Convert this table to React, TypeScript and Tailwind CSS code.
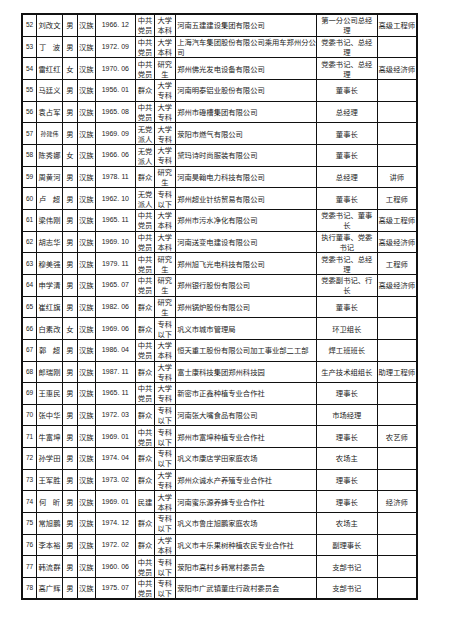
import React from "react";

type Row = [string, string, string, string, string, string, string, string, string, string];

const rows: Row[] = [
  ["52", "刘改文", "男", "汉族", "1966.12", "中共\n党员", "大学\n本科", "河南五建建设集团有限公司", "第一分公司总经\n理", "高级工程师"],
  ["53", "丁波", "男", "汉族", "1972.09", "中共\n党员", "大学\n本科", "上海汽车集团股份有限公司乘用车郑州分公\n司", "党委书记、总经\n理", ""],
  ["54", "雷红红", "女", "汉族", "1970.06", "中共\n党员", "研究\n生", "郑州佛光发电设备有限公司", "党委书记、总经\n理", "高级经济师"],
  ["55", "马廷义", "男", "汉族", "1956.01", "群众", "大学\n专科", "河南明泰铝业股份有限公司", "董事长", ""],
  ["56", "袁占军", "男", "汉族", "1965.08", "中共\n党员", "大学\n专科", "郑州市磴槽集团有限公司", "总经理", ""],
  ["57", "孙建伟", "男", "汉族", "1969.09", "无党\n派人\n士", "大学\n专科", "荥阳市燃气有限公司", "董事长", ""],
  ["58", "陈秀娜", "女", "汉族", "1966.06", "无党\n派人\n士", "大学\n专科", "黛玛诗时尚服装有限公司", "董事长", ""],
  ["59", "周黄河", "男", "汉族", "1978.11", "群众", "研究\n生", "河南昊翰电力科技有限公司", "总经理", "讲师"],
  ["60", "卢超", "男", "汉族", "1962.10", "无党\n派人\n士", "专科\n以下", "郑州超业针纺贸易有限公司", "董事长", "工程师"],
  ["61", "梁伟刚", "男", "汉族", "1965.11", "中共\n党员", "大学\n本科", "郑州市污水净化有限公司", "党委书记、董事\n长", "高级工程师"],
  ["62", "胡志华", "男", "汉族", "1969.10", "中共\n党员", "大学\n本科", "河南送变电建设有限公司", "执行董事、党委\n书记", "高级经济师"],
  ["63", "穆美强", "男", "汉族", "1979.11", "中共\n党员", "研究\n生", "郑州旭飞光电科技有限公司", "党委书记、总经\n理", "工程师"],
  ["64", "申学清", "男", "汉族", "1965.07", "中共\n党员", "研究\n生", "郑州银行股份有限公司", "党委副书记、行\n长", "高级经济师"],
  ["65", "崔红旗", "男", "汉族", "1982.06", "群众", "研究\n生", "郑州锅炉股份有限公司", "董事长", ""],
  ["66", "白素改", "女", "汉族", "1969.06", "群众", "专科\n以下", "巩义市城市管理局", "环卫组长", ""],
  ["67", "郭超", "男", "汉族", "1986.04", "中共\n党员", "大学\n本科", "恒天重工股份有限公司加工事业部二工部", "焊工班班长", ""],
  ["68", "郎瑞刚", "男", "汉族", "1987.11", "群众", "大学\n专科", "富士康科技集团郑州科技园", "生产技术组组长", "助理工程师"],
  ["69", "王惠民", "男", "汉族", "1965.11", "中共\n党员", "大学\n专科", "新密市正鑫种植专业合作社", "理事长", ""],
  ["70", "张中华", "男", "汉族", "1972.03", "群众", "专科\n以下", "河南张大嘴食品有限公司", "市场经理", ""],
  ["71", "牛富坤", "男", "汉族", "1969.01", "中共\n党员", "专科\n以下", "郑州市富坤种植专业合作社", "理事长", "农艺师"],
  ["72", "孙学田", "男", "汉族", "1974.04", "群众", "专科\n以下", "巩义市康店学田家庭农场", "农场主", ""],
  ["73", "王军胜", "男", "汉族", "1973.02", "群众", "大学\n专科", "郑州众诚水产养殖专业合作社", "理事长", ""],
  ["74", "何昕", "男", "汉族", "1969.01", "民建", "大学\n本科", "河南蜜乐源养蜂专业合作社", "理事长", "经济师"],
  ["75", "常旭鹏", "男", "汉族", "1974.12", "群众", "专科\n以下", "巩义市鲁庄旭鹏家庭农场", "农场主", ""],
  ["76", "李本裕", "男", "汉族", "1972.02", "群众", "大学\n本科", "巩义市丰乐果树种植农民专业合作社", "副理事长", ""],
  ["77", "韩流群", "男", "汉族", "1960.06", "中共\n党员", "专科\n以下", "荥阳市高村乡韩常村委员会", "支部书记", ""],
  ["78", "高广辉", "男", "汉族", "1975.07", "中共\n党员", "专科\n以下", "荥阳市广武镇董庄行政村委员会", "支部书记", ""],
];

const cjk = { fontFamily: '"Noto Sans CJK SC", "Noto Sans", sans-serif' };
const num = { fontFamily: '"Liberation Sans", Arial, sans-serif' };

export default function App() {
  return (
    <div className="w-[476px] h-[626px] bg-white pl-[21px] pt-[13px]" style={cjk}>
      <div className="grid w-[397px] grid-cols-[14px_26px_15px_17.7px_40.3px_19px_20.7px_141.3px_60.7px_40.3px] auto-rows-[21.66px] border-t-2 border-l-2 border-[#111] text-[7.3px] leading-[10px] text-[#1c1c1c]">
        {rows.map((r, ri) => {
          const last = ri === rows.length - 1;
          const bb = last ? "border-b-2" : "border-b";
          const base = `${bb} border-r border-[#111] overflow-hidden flex items-center`;
          const [no, name, sex, nation, date, party, edu, company, pos, title] = r;
          const [y, m] = date.split(".");
          const threeLine = party.split("\n").length > 2;
          return (
            <React.Fragment key={no}>
              <div className={`${base} justify-center text-[6.5px]`} style={num}>{no}</div>
              <div className={`${base} ${name.length === 2 ? "justify-between px-[2px]" : "justify-center"} ${no === "57" ? "text-[6px]" : ""}`}>
                {name.length === 2 ? (
                  <>
                    <span>{name[0]}</span>
                    <span>{name[1]}</span>
                  </>
                ) : (
                  name
                )}
              </div>
              <div className={`${base} justify-center`}>{sex}</div>
              <div className={`${base} justify-center`}>{nation}</div>
              <div className={`${base} justify-center text-[7px]`} style={num}>
                {y}.<span className="ml-[2px]">{m}</span>
              </div>
              <div className={`${bb} border-r border-[#111] overflow-hidden flex justify-center ${threeLine ? "items-start pt-[1px]" : "items-center"}`}>
                <span className="whitespace-pre text-center">{party}</span>
              </div>
              <div className={`${base} justify-center`}>
                <span className="whitespace-pre text-center">{edu}</span>
              </div>
              <div className={`${base} justify-start pl-[1.5px]`}>
                <span className="whitespace-pre">{company}</span>
              </div>
              <div className={`${base} justify-center`}>
                <span className="whitespace-pre text-center">{pos}</span>
              </div>
              <div className={`${bb} border-r-2 border-[#111] overflow-hidden flex items-center justify-center whitespace-nowrap`}>{title}</div>
            </React.Fragment>
          );
        })}
      </div>
    </div>
  );
}
